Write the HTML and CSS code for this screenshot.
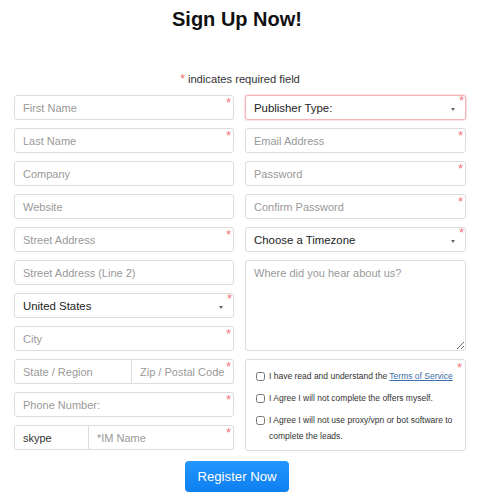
FILE: index.html
```html
<!DOCTYPE html>
<html lang="en">
  <head>
    <meta charset="UTF-8" />
    <meta name="viewport" content="width=device-width, initial-scale=1.0" />
    <title>Sign Up Now!</title>
    <link rel="stylesheet" href="styles.css">
  </head>
  <body>
    <div class="container">
      <h1>Sign Up Now!</h1>
      <p class="note"><span class="star">*</span> indicates required field</p>
      <form class="form">
        <div class="col">
          <div class="field"><input type="text" placeholder="First Name" /><span class="req">*</span></div>
          <div class="field"><input type="text" placeholder="Last Name" /><span class="req">*</span></div>
          <div class="field"><input type="text" placeholder="Company" /></div>
          <div class="field"><input type="text" placeholder="Website" /></div>
          <div class="field"><input type="text" placeholder="Street Address" /><span class="req">*</span></div>
          <div class="field"><input type="text" placeholder="Street Address (Line 2)" /></div>
          <div class="field select-wrap">
            <select><option>United States</option></select><span class="caret"></span><span class="req up">*</span>
          </div>
          <div class="field"><input type="text" placeholder="City" /><span class="req">*</span></div>
          <div class="field group">
            <input type="text" class="state" placeholder="State / Region" />
            <input type="text" class="zip" placeholder="Zip / Postal Code" /><span class="req">*</span>
          </div>
          <div class="field"><input type="text" placeholder="Phone Number:" /><span class="req">*</span></div>
          <div class="field group">
            <input type="text" class="skype" value="skype" />
            <input type="text" class="im" placeholder="*IM Name" /><span class="req">*</span>
          </div>
        </div>

        <div class="col">
          <div class="field select-wrap pub-wrap">
            <select class="pub"><option>Publisher Type:</option></select><span class="caret"></span><span class="req up">*</span>
          </div>
          <div class="field"><input type="email" placeholder="Email Address" /><span class="req">*</span></div>
          <div class="field"><input type="password" placeholder="Password" /><span class="req">*</span></div>
          <div class="field"><input type="password" placeholder="Confirm Password" /><span class="req">*</span></div>
          <div class="field select-wrap">
            <select><option>Choose a Timezone</option></select><span class="caret"></span><span class="req up">*</span>
          </div>
          <div class="field"><textarea placeholder="Where did you hear about us?"></textarea></div>
          <div class="field terms">
            <label><input type="checkbox" /><span>I have read and understand the <a href="#">Terms of Service</a></span></label>
            <label><input type="checkbox" /><span>I Agree I will not complete the offers myself.</span></label>
            <label class="last"><input type="checkbox" /><span>I Agree I will not use proxy/vpn or bot software to complete the leads.</span></label>
            <span class="req">*</span>
          </div>
        </div>

        <div class="actions">
          <button type="submit">Register Now</button>
        </div>
      </form>
    </div>
  </body>
</html>
```
FILE: styles.css
```css
* {
  box-sizing: border-box;
}

body {
  margin: 0;
  font-family: "Liberation Sans", Arial, sans-serif;
  color: #222;
  background: #fff;
}

.container {
  width: 452px;
  margin: 0 0 0 14px;
}

h1 {
  font-size: 20px;
  font-weight: bold;
  text-align: center;
  margin: 8px 0 0;
  padding-right: 6px;
  line-height: 23px;
  color: #111;
}

.note {
  text-align: center;
  font-size: 11.2px;
  color: #333;
  margin: 41px 0 0;
  line-height: 14px;
}

.star {
  color: #f06a6a;
  font-size: 12px;
}

.form {
  display: grid;
  grid-template-columns: 220px 221px;
  column-gap: 11px;
  margin-top: 9px;
}

.col {
  display: flex;
  flex-direction: column;
  gap: 8px;
}

.field {
  position: relative;
}

input[type="text"],
input[type="email"],
input[type="password"],
select,
textarea {
  display: block;
  width: 100%;
  height: 25px;
  border: 1px solid #dcdcdc;
  border-radius: 3px;
  padding: 0 8px;
  font-family: "Liberation Sans", Arial, sans-serif;
  font-size: 11px;
  color: #333;
  background: #fff;
  outline: none;
}

::placeholder {
  color: #999;
  opacity: 1;
}

select {
  appearance: none;
  -webkit-appearance: none;
  font-size: 11.4px;
  color: #222;
}

.pub-wrap select.pub {
  border: 1px solid #f6b3ba;
  box-shadow: 0 0 0 1px #fbe1e4;
}

.caret {
  position: absolute;
  right: 11px;
  top: 13px;
  width: 0;
  height: 0;
  border-left: 2.5px solid transparent;
  border-right: 2.5px solid transparent;
  border-top: 3px solid #666;
}

.req {
  position: absolute;
  right: 3px;
  top: 1px;
  color: #f27878;
  font-size: 13px;
  line-height: 13px;
}

.req.up {
  top: -1px;
  right: 2px;
}

.group {
  display: flex;
}

.group input {
  flex: none;
}

.group .state {
  width: 118px;
  border-radius: 3px 0 0 3px;
}

.group .zip {
  width: 102px;
  border-left: none;
  border-radius: 0 3px 3px 0;
}

.group .skype {
  width: 75px;
  border-radius: 3px 0 0 3px;
}

.group .im {
  width: 145px;
  border-left: none;
  border-radius: 0 3px 3px 0;
}

textarea {
  height: 91px;
  padding: 6px 8px;
  resize: vertical;
}

.terms {
  height: 92px;
  border: 1px solid #dcdcdc;
  border-radius: 3px;
  padding: 8px 2px 0 10px;
  font-size: 8.5px;
  color: #333;
}

.terms label {
  display: flex;
  align-items: flex-start;
  line-height: 16px;
  margin-bottom: 6px;
}

.terms label:first-child span {
  white-space: nowrap;
}

.terms input {
  width: 9px;
  height: 9px;
  margin: 4px 4px 0 0;
  flex: none;
}

.terms .last span {
  max-width: 192px;
}

.terms a {
  color: #3b6ea8;
}

.actions {
  grid-column: 1 / 3;
  display: flex;
  justify-content: center;
  margin-top: 10px;
  padding-right: 6px;
}

button {
  width: 104px;
  height: 31px;
  border: none;
  border-radius: 4px;
  background: linear-gradient(#2496ff, #0d7ff0);
  color: #fff;
  font-family: "Liberation Sans", Arial, sans-serif;
  font-size: 13.2px;
  cursor: pointer;
}
```
